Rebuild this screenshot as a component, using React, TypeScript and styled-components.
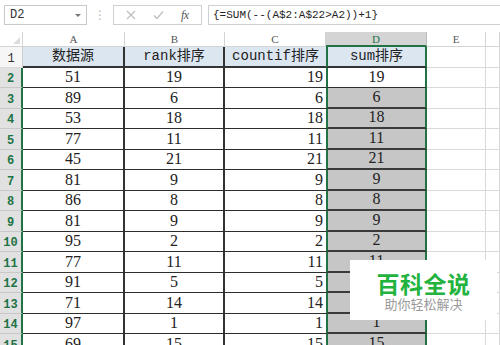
import React from 'react';
import styled, { createGlobalStyle, css } from 'styled-components';

const GlobalStyle = createGlobalStyle`
  html, body {
    margin: 0;
    padding: 0;
    background: #ffffff;
    overflow: hidden;
  }
`;

const MONO = `"Liberation Mono", "Noto Sans CJK SC", monospace`;
const SERIF = `"Liberation Serif", "Noto Sans CJK SC", serif`;
const GREEN = '#217346';

const Page = styled.div`
  position: relative;
  width: 500px;
  height: 345px;
  overflow: hidden;
  background: #fff;
  display: flex;
  flex-direction: column;
`;

/* ---------- formula bar ---------- */

const FormulaBar = styled.div`
  display: flex;
  align-items: center;
  height: 20px;
  padding: 5px 0 0 4px;
  margin-bottom: 7px;
`;

const NameBox = styled.div`
  box-sizing: border-box;
  width: 83px;
  height: 20px;
  border: 1px solid #c9c9c9;
  display: flex;
  align-items: center;
  justify-content: space-between;
  padding: 0 5px 0 5px;
  font: 12px ${MONO};
  color: #333;
`;

const DropArrow = styled.span`
  width: 0;
  height: 0;
  border-left: 3px solid transparent;
  border-right: 3px solid transparent;
  border-top: 3px solid #777;
`;

const Grip = styled.div`
  width: 26px;
  display: flex;
  justify-content: center;
  color: #b5b5b5;
  font: 12px "DejaVu Sans", sans-serif;
`;

const ButtonBox = styled.div`
  box-sizing: border-box;
  width: 89px;
  height: 20px;
  border: 1px solid #d0d0d0;
  display: flex;
  align-items: center;
  justify-content: space-around;
  padding: 0 4px;
`;

const Fx = styled.span`
  font: italic 12px "Liberation Serif", serif;
  color: #555;
  letter-spacing: -0.5px;
`;

const FormulaInput = styled.div`
  box-sizing: border-box;
  flex: 1;
  height: 20px;
  margin-left: 6px;
  border: 1px solid #d0d0d0;
  border-right: none;
  display: flex;
  align-items: center;
  padding-left: 4px;
  font: 11px ${MONO};
  color: #222;
  white-space: nowrap;
`;

/* ---------- sheet ---------- */

const Sheet = styled.div`
  display: grid;
  grid-template-columns: 23px 102px 100px 101px 101px 59px 1fr;
  grid-template-rows: 15px repeat(15, 20.5px);
`;

const Corner = styled.div`
  position: relative;
  box-sizing: border-box;
  background: #fff;
  border-right: 1px solid #d4d4d4;
  border-bottom: 1px solid #d4d4d4;
  &::after {
    content: '';
    position: absolute;
    right: 2px;
    bottom: 2px;
    border-left: 7px solid transparent;
    border-bottom: 7px solid #dcdcdc;
  }
`;

const ColHead = styled.div<{ $active?: boolean }>`
  box-sizing: border-box;
  display: flex;
  align-items: center;
  justify-content: center;
  font: 11px "Liberation Serif", serif;
  color: #555;
  background: #fff;
  border-right: 1px solid #d4d4d4;
  border-bottom: 1px solid #d4d4d4;
  ${(p) =>
    p.$active &&
    css`
      background: #d4d4d4;
      color: ${GREEN};
      border-bottom: 2px solid ${GREEN};
      border-right: 1px solid #bdbdbd;
    `}
`;

const RowHead = styled.div<{ $active?: boolean }>`
  box-sizing: border-box;
  display: flex;
  align-items: flex-end;
  justify-content: center;
  padding-bottom: 1px;
  font: 12px ${MONO};
  color: #333;
  background: #f6f6f6;
  border-right: 1px solid #cfcfcf;
  border-bottom: 1px solid #dadada;
  ${(p) =>
    p.$active &&
    css`
      background: #e1e1e1;
      color: ${GREEN};
      font-weight: bold;
      border-right: 2px solid ${GREEN};
      border-bottom: 1px solid #c8c8c8;
    `}
`;

type CellKind = 'title' | 'data' | 'active' | 'sel' | 'blank';

const Cell = styled.div<{ $kind: CellKind; $align?: 'center' | 'right'; $edge?: boolean; $col?: 'D' }>`
  box-sizing: border-box;
  display: flex;
  align-items: flex-end;
  justify-content: ${(p) => (p.$align === 'right' ? 'flex-end' : 'center')};
  padding: 0 3px 1px 3px;
  font: 16px ${SERIF};
  line-height: 18px;
  color: #222;
  white-space: nowrap;
  overflow: hidden;
  background: #fff;
  border-bottom: 1px solid #2d2d2d;
  border-right: ${(p) => (p.$edge ? '2px solid #333' : 'none')};
  ${(p) =>
    p.$kind === 'title' &&
    css`
      font: 14px ${MONO};
      line-height: 18px;
      background: #dce6f1;
      border-bottom: 2px solid #333;
    `}
  ${(p) =>
    p.$kind === 'sel' &&
    css`
      background: #c6c6c6;
      border-bottom: 2px solid #3a3a3a;
    `}
  ${(p) =>
    p.$col === 'D' &&
    css`
      border-left: 2px solid ${GREEN};
      border-right: 2px solid ${GREEN};
    `}
  ${(p) =>
    p.$kind === 'blank' &&
    css`
      border-bottom: 1px solid #dadada;
      border-right: 1px solid #dadada;
    `}
`;

const Watermark = styled.div`
  position: absolute;
  z-index: 2;
  left: 350px;
  top: 260px;
  width: 147px;
  height: 60px;
  background: #fff;
  display: flex;
  flex-direction: column;
  align-items: center;
  justify-content: center;
  padding-top: 2px;
  box-sizing: border-box;
`;

const BrandTitle = styled.div`
  font: bold 23px "Noto Sans CJK SC", sans-serif;
  color: #22b33e;
  line-height: 26px;
  letter-spacing: 0.5px;
`;

const BrandSub = styled.div`
  font: 13px "Noto Sans CJK SC", sans-serif;
  color: #9a9a9a;
  line-height: 16px;
`;

const rows: string[][] = [
  ['51', '19', '19', '19'],
  ['89', '6', '6', '6'],
  ['53', '18', '18', '18'],
  ['77', '11', '11', '11'],
  ['45', '21', '21', '21'],
  ['81', '9', '9', '9'],
  ['86', '8', '8', '8'],
  ['81', '9', '9', '9'],
  ['95', '2', '2', '2'],
  ['77', '11', '11', '11'],
  ['91', '5', '5', '5'],
  ['71', '14', '14', '14'],
  ['97', '1', '1', '1'],
  ['69', '15', '15', '15'],
];

const CrossIcon = () => (
  <svg width="10" height="10" viewBox="0 0 10 10">
    <path d="M1 1 L9 9 M9 1 L1 9" stroke="#bdbdbd" strokeWidth="1.2" fill="none" />
  </svg>
);

const CheckIcon = () => (
  <svg width="11" height="10" viewBox="0 0 11 10">
    <path d="M1 5.5 L4 8.5 L10 1.5" stroke="#bdbdbd" strokeWidth="1.2" fill="none" />
  </svg>
);

const App: React.FC = () => {
  const heads = ['A', 'B', 'C', 'D', 'E', ''];
  return (
    <Page>
      <GlobalStyle />
      <FormulaBar>
        <NameBox>
          D2
          <DropArrow />
        </NameBox>
        <Grip>⋮</Grip>
        <ButtonBox>
          <CrossIcon />
          <CheckIcon />
          <Fx>fx</Fx>
        </ButtonBox>
        <FormulaInput>{'{=SUM(--(A$2:A$22>A2))+1}'}</FormulaInput>
      </FormulaBar>

      <Sheet>
        <Corner />
        {heads.map((h, i) => (
          <ColHead key={i} $active={h === 'D'}>
            {h}
          </ColHead>
        ))}

        <RowHead>1</RowHead>
        <Cell $kind="title" $edge>数据源</Cell>
        <Cell $kind="title" $edge>rank排序</Cell>
        <Cell $kind="title">countif排序</Cell>
        <Cell $kind="title" $col="D">sum排序</Cell>
        <Cell $kind="blank" />
        <Cell $kind="blank" />

        {rows.map((r, i) => (
          <React.Fragment key={i}>
            <RowHead $active>{i + 2}</RowHead>
            <Cell $kind="data" $edge>{r[0]}</Cell>
            <Cell $kind="data" $edge>{r[1]}</Cell>
            <Cell $kind="data" $align="right">{r[2]}</Cell>
            <Cell $kind={i === 0 ? 'active' : 'sel'} $col="D">{r[3]}</Cell>
            <Cell $kind="blank" />
            <Cell $kind="blank" />
          </React.Fragment>
        ))}
      </Sheet>

      <Watermark>
        <BrandTitle>百科全说</BrandTitle>
        <BrandSub>助你轻松解决</BrandSub>
      </Watermark>
    </Page>
  );
};

export default App;
